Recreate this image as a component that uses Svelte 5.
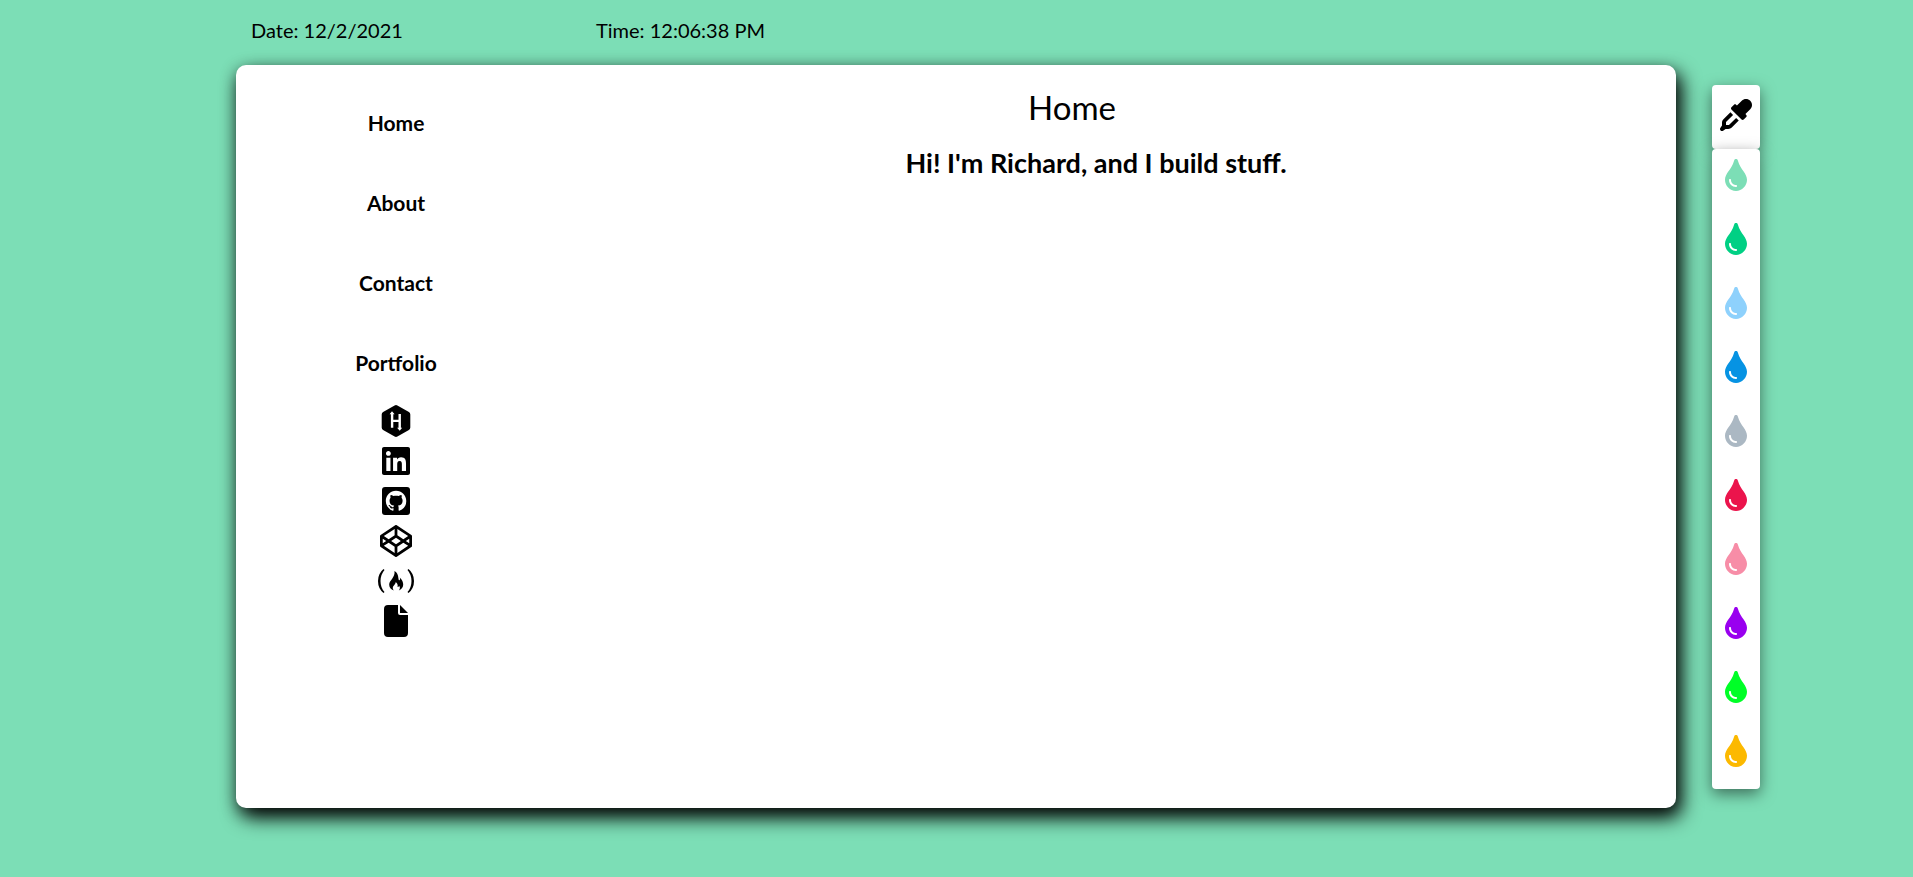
<script>
  const links = ['Home', 'About', 'Contact', 'Portfolio'];

  const colors = [
    { name: 'Mint', value: '#7cdeb6' },
    { name: 'Emerald', value: '#00d084' },
    { name: 'Sky', value: '#8ed1fc' },
    { name: 'Blue', value: '#0693e3' },
    { name: 'Gray', value: '#abb8c3' },
    { name: 'Red', value: '#eb144c' },
    { name: 'Pink', value: '#f78da7' },
    { name: 'Purple', value: '#9900ef' },
    { name: 'Green', value: '#00ff27' },
    { name: 'Amber', value: '#fcb900' }
  ];

  let background = $state(colors[0].value);
</script>

<div class="page" style:background-color={background}>
  <header>
    <span>Date: 12/2/2021</span>
    <span>Time: 12:06:38 PM</span>
  </header>

  <div class="card">
    <nav>
      {#each links as link}
        <a class="link" href={'#' + link.toLowerCase()}>{link}</a>
      {/each}
      <div class="social">
        <a href="#hackerrank" aria-label="HackerRank">
          <svg width="32" height="32" viewBox="0 0 32 32">
            <path d="M14.600.500q1.400-.8 2.800 0l11.500 6.600q1.400.800 1.400 2.400v13q0 1.600-1.400 2.400l-11.500 6.600q-1.400.800-2.800 0L3.100 24.900q-1.400-.8-1.400-2.400v-13q0-1.600 1.400-2.400z" />
            <path fill="#fff" d="M12 6.200l2.600 3h-1.300v5.500h5.200V9h2.400v13.800h1.300l-2.500 3-2.600-3h1.400v-5.700h-5.200v5.700h-2.400V9.200H9.600z" />
          </svg>
        </a>
        <a href="#linkedin" aria-label="LinkedIn">
          <svg width="28" height="32" viewBox="0 0 448 512">
            <path d="M416 32H31.900C14.300 32 0 46.500 0 64.300v383.400C0 465.500 14.300 480 31.900 480H416c17.600 0 32-14.500 32-32.300V64.300c0-17.800-14.400-32.300-32-32.300zM135.400 416H69V202.200h66.500V416zm-33.200-243c-21.300 0-38.500-17.300-38.500-38.500S80.900 96 102.200 96c21.200 0 38.500 17.300 38.500 38.500 0 21.300-17.200 38.500-38.500 38.500zm282.100 243h-66.400V312c0-24.800-.5-56.700-34.500-56.700-34.600 0-39.900 27-39.900 54.900V416h-66.400V202.200h63.700v29.200h.9c8.900-16.800 30.600-34.500 62.900-34.500 67.200 0 79.700 44.300 79.700 101.900V416z" />
          </svg>
        </a>
        <a href="#github" aria-label="GitHub">
          <svg width="28" height="32" viewBox="0 0 28 32">
            <rect y="2" width="28" height="28" rx="3" />
            <path fill="#fff" transform="translate(3.800 5.800) scale(1.280)" d="M8 0C3.580 0 0 3.580 0 8c0 3.540 2.290 6.530 5.470 7.590.4.070.55-.17.55-.38 0-.19-.01-.82-.01-1.490-2.010.370-2.530-.49-2.690-.94-.09-.23-.48-.94-.82-1.130-.28-.15-.68-.52-.01-.53.630-.01 1.080.580 1.230.820.720 1.210 1.870.870 2.330.660.070-.52.280-.87.510-1.070-1.780-.2-3.640-.89-3.640-3.950 0-.87.310-1.590.820-2.150-.08-.2-.36-1.020.080-2.120 0 0 .670-.21 2.200.820.640-.18 1.320-.27 2-.27s1.360.090 2 .270c1.530-1.040 2.200-.82 2.200-.82.440 1.100.160 1.920.080 2.120.510.560.820 1.270.820 2.150 0 3.070-1.870 3.750-3.650 3.950.290.250.540.730.540 1.480 0 1.070-.01 1.930-.01 2.200 0 .210.150.460.550.380A8.010 8.010 0 0 0 16 8c0-4.420-3.580-8-8-8z" />
          </svg>
        </a>
        <a href="#codepen" aria-label="CodePen">
          <svg width="32" height="32" viewBox="0 0 512 512">
            <path d="M502.285 159.704l-234-156c-7.987-4.915-16.511-4.960-24.571 0l-234 156C3.714 163.703 0 170.847 0 177.989v155.999c0 7.143 3.714 14.286 9.715 18.286l234 156.022c7.987 4.915 16.511 4.960 24.571 0l234-156.022c6-3.999 9.715-11.143 9.715-18.286V177.989c-.001-7.142-3.715-14.286-9.716-18.285zM278 63.131l172.286 114.858-76.857 51.429L278 165.703V63.131zm-44 0v102.572l-95.429 63.715-76.857-51.429L234 63.131zM44 219.132l55.143 36.857L44 292.847v-73.715zm190 229.715L61.714 333.989l76.857-51.429L234 346.275v102.572zm22-140.858l-77.715-52 77.715-52 77.715 52-77.715 52zm22 140.858V346.275l95.429-63.715 76.857 51.429L278 448.847zm190-156l-55.143-36.857L468 219.132v73.715z" />
          </svg>
        </a>
        <a href="#freecodecamp" aria-label="freeCodeCamp">
          <svg width="36" height="32" viewBox="0 0 36 32">
            <path d="M5.500 4Q0 8.500 0 16t5.500 12l1-.9Q2.500 22.500 2.500 16T6.500 4.900zM30.500 4Q36 8.500 36 16t-5.500 12l-1-.9q4-4.600 4-11.100t-4-11.100z" />
            <path d="M16.500 6c3.200 1.800 3.700 5 4 7.700.2 2 1.300 2.300 1.600.4.100-.8-.1-1.300-.3-1.700 2.300 2 3.500 4.800 3.400 7.400-.1 2.900-1.900 4.700-4.400 5.700 1.300-1.500 1.500-3.400.3-4.800-.3.900-.8 1.300-1.500 1.200.4-2-.4-3.600-1.900-4.800.2 2.200-2.900 3.600-2.900 6 0 1.100.5 1.900 1.400 2.500-3-.7-5-2.900-5-5.900 0-4.500 6.200-7 5.300-13.700z" />
          </svg>
        </a>
        <a href="#resume" aria-label="Resume">
          <svg width="24" height="32" viewBox="0 0 24 32">
            <path d="M4 0h10v8q0 2 2 2h8v18q0 4-4 4H4q-4 0-4-4V4q0-4 4-4zM16 0l8 8h-8z" />
          </svg>
        </a>
      </div>
    </nav>

    <main>
      <h1>Home</h1>
      <h2>Hi! I'm Richard, and I build stuff.</h2>
    </main>
  </div>

  <aside>
    <button class="picker" aria-label="Pick a color">
      <svg width="32" height="32" viewBox="0 0 512 512">
        <path d="M483.880 28.120c-37.470-37.500-98.280-37.500-135.750 0l-77.090 77.090-13.100-13.100c-9.440-9.440-24.650-9.310-33.940 0l-40.970 40.970c-9.370 9.370-9.370 24.570 0 33.940l161.940 161.940c9.440 9.440 24.650 9.310 33.940 0L419.880 288c9.370-9.370 9.370-24.570 0-33.940l-13.100-13.100 77.090-77.090c37.510-37.480 37.510-98.260.01-135.750z" />
        <path d="M55.400 323.300c-15 15-23.400 35.400-23.400 56.600v42.400L5.400 462.200c-8.500 12.700-6.800 29.600 4 40.400s27.700 12.500 40.400 4L89.700 480h42.400c21.200 0 41.600-8.400 56.600-23.400L300 345l-42-42L143.400 416H96v-47.400L209 254l-42-42z" />
      </svg>
    </button>
    <div class="palette">
      {#each colors as color}
        <button aria-label={color.name} style:color={color.value} onclick={() => (background = color.value)}>
          <svg width="22" height="32" viewBox="0 0 352 512">
            <path d="M205.220 22.090c-7.940-28.780-49.440-30.120-58.440 0C100.010 179.850 0 222.720 0 333.910 0 432.350 78.720 512 176 512s176-79.650 176-178.090c0-111.750-99.790-153.340-146.780-311.820zM176 448c-61.750 0-112-50.250-112-112 0-8.840 7.160-16 16-16s16 7.160 16 16c0 44.110 35.890 80 80 80 8.840 0 16 7.160 16 16s-7.160 16-16 16z" />
          </svg>
        </button>
      {/each}
    </div>
  </aside>
</div>

<style>
  :global(body) {
    margin: 0;
  }

  .page {
    box-sizing: border-box;
    min-height: 100vh;
    padding: 0 153px 69px 236px;
    display: grid;
    grid-template: 65px 1fr / 1fr 48px;
    column-gap: 36px;
    font-family: Lato, 'Open Sans', sans-serif;
    color: #000;
  }

  header {
    grid-column: 1 / -1;
    padding: 14px 15px 0;
    display: grid;
    grid-template-columns: 345px 1fr;
    align-items: start;
    font-size: 20px;
    line-height: 32px;
  }

  .card {
    display: grid;
    grid-template-columns: 320px 1fr;
    background: #fff;
    border-radius: 10px;
    box-shadow:
      5px 9px 20px #000,
      0 5px 15px rgb(0 0 0 / 35%);
  }

  nav {
    padding-top: 18px;
    display: flex;
    flex-direction: column;
    align-items: center;
  }

  nav a {
    color: inherit;
    text-decoration: none;
  }

  .link {
    font-size: 21px;
    font-weight: 700;
    line-height: 80px;
  }

  .social {
    padding-top: 2px;
    display: flex;
    flex-direction: column;
    align-items: center;
    gap: 8px;
  }

  svg {
    display: block;
    fill: currentColor;
  }

  main {
    padding: 18px 40px 20px 0;
    display: flex;
    flex-direction: column;
    align-items: center;
  }

  h1 {
    margin: 0;
    padding-right: 48px;
    font-size: 33px;
    font-weight: 400;
    line-height: 48px;
  }

  h2 {
    margin: 8px 0 0;
    font-size: 27px;
    font-weight: 700;
    line-height: 48px;
  }

  aside {
    padding-top: 20px;
  }

  button {
    width: 100%;
    height: 64px;
    padding: 0;
    display: flex;
    justify-content: center;
    border: 0;
    background: #fff;
    cursor: pointer;
  }

  .picker {
    padding-top: 14px;
    border-radius: 4px;
    box-shadow: 0 5px 15px rgb(0 0 0 / 50%);
  }

  .palette {
    position: relative;
    border-radius: 4px;
    background: #fff;
    box-shadow: 0 5px 15px rgb(0 0 0 / 50%);
  }

  .palette button {
    padding-top: 10px;
    background: none;
  }
</style>
